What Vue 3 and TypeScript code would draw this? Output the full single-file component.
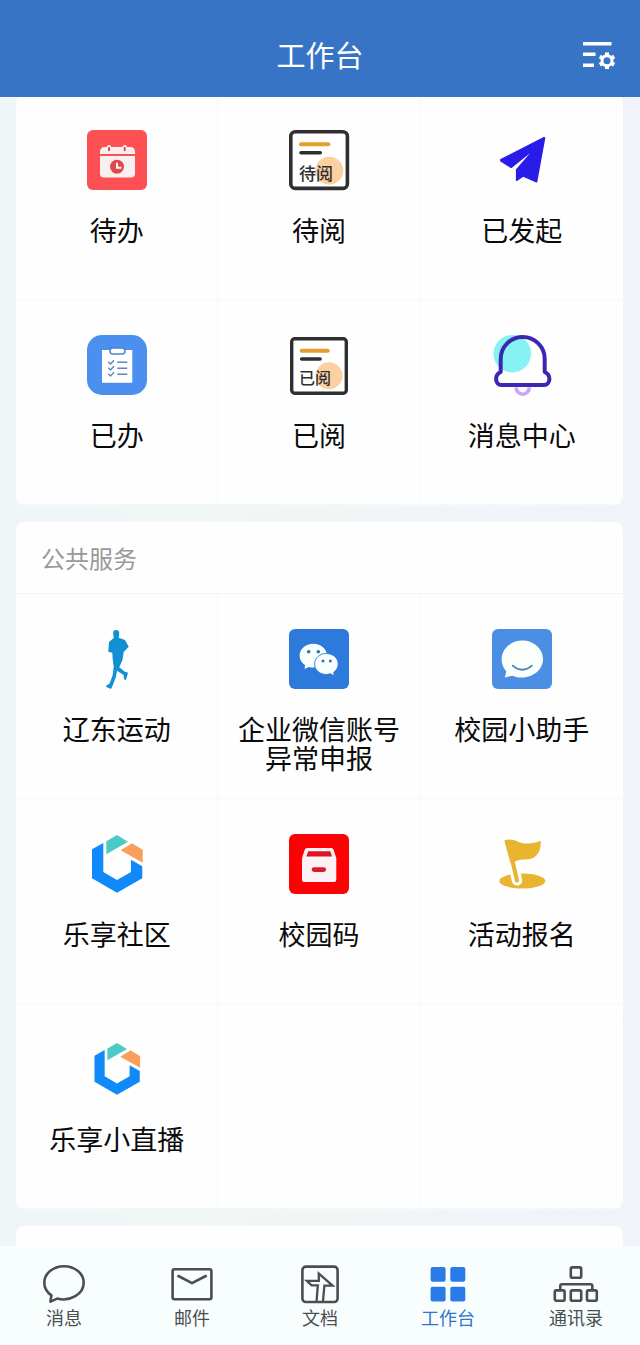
<script setup lang="ts">
import { ref } from 'vue'

type IconName =
  | 'calendar' | 'unread' | 'plane' | 'clipboard' | 'read' | 'bell'
  | 'runner' | 'wechat' | 'assistant' | 'hexagon' | 'code' | 'flag' | 'hexagonSmall'

interface AppItem {
  label: string
  icon: IconName
}

interface Section {
  id: string
  title?: string
  items: AppItem[]
}

const sections: Section[] = [
  {
    id: 'approval',
    items: [
      { label: '待办', icon: 'calendar' },
      { label: '待阅', icon: 'unread' },
      { label: '已发起', icon: 'plane' },
      { label: '已办', icon: 'clipboard' },
      { label: '已阅', icon: 'read' },
      { label: '消息中心', icon: 'bell' },
    ],
  },
  {
    id: 'public',
    title: '公共服务',
    items: [
      { label: '辽东运动', icon: 'runner' },
      { label: '企业微信账号异常申报', icon: 'wechat' },
      { label: '校园小助手', icon: 'assistant' },
      { label: '乐享社区', icon: 'hexagon' },
      { label: '校园码', icon: 'code' },
      { label: '活动报名', icon: 'flag' },
      { label: '乐享小直播', icon: 'hexagonSmall' },
    ],
  },
]

const blanks = (count: number): number => (3 - (count % 3)) % 3

const tabs = [
  { id: 'chat', label: '消息' },
  { id: 'mail', label: '邮件' },
  { id: 'docs', label: '文档' },
  { id: 'work', label: '工作台' },
  { id: 'contacts', label: '通讯录' },
]
const active = ref('work')
</script>

<template>
  <div class="app">
    <header class="topbar">
      <h1>工作台</h1>
      <button class="settings" type="button" aria-label="设置">
        <svg width="36" height="36" viewBox="0 -4 36 36" fill="none" stroke="#fff">
          <path d="M2 3.7H30.5M2 14.3H14.5M2 25.3H13" stroke-width="3.4" />
          <circle cx="26" cy="20.7" r="5" stroke-width="3" />
          <path
            v-for="n in 6"
            :key="n"
            d="M26 12.4V15.4"
            stroke-width="4"
            :transform="`rotate(${n * 60} 26 20.7)`"
          />
        </svg>
      </button>
    </header>

    <main class="content">
      <section v-for="s in sections" :key="s.id" class="card">
        <h2 v-if="s.title">{{ s.title }}</h2>
        <ul class="grid">
          <li v-for="item in s.items" :key="item.label">
            <button class="tile" type="button">
              <svg class="icon" viewBox="0 0 60 60" aria-hidden="true">
                <g v-if="item.icon === 'calendar'">
                  <rect width="60" height="60" rx="6" fill="#fd5054" />
                  <path d="M13 24V22Q13 17 18 17H43Q48 17 48 22V24Z" fill="#fbeeee" />
                  <path d="M13 26H48V43.5Q48 47.5 44 47.5H17Q13 47.5 13 43.5Z" fill="#f6f0f0" />
                  <g stroke-linecap="round">
                    <path d="M22 17.3V19.7M37.7 17.3V19.7" stroke="#fbeeee" stroke-width="4.6" />
                    <path d="M22 18V20.3M37.7 18V20.3" stroke="#e0474c" stroke-width="2" />
                  </g>
                  <circle cx="30" cy="36.7" r="7" fill="#e2474d" />
                  <path d="M30 32.8V37.8H34.4" fill="none" stroke="#fff" stroke-width="2" />
                </g>

                <g v-else-if="item.icon === 'unread'">
                  <rect x="1.8" y="1.8" width="56.6" height="56.6" rx="4.5" fill="#fff" stroke="#2f2f31" stroke-width="3.6" />
                  <circle cx="40.3" cy="40.7" r="14" fill="#fcd0a0" />
                  <path d="M12 14.3H39.3" stroke="#e59d2b" stroke-width="4" stroke-linecap="round" />
                  <path d="M12 22.8H31.3" stroke="#2f2f31" stroke-width="3.6" stroke-linecap="round" />
                  <text class="glyph" x="10" y="50" font-size="17">待阅</text>
                </g>

                <g v-else-if="item.icon === 'read'">
                  <rect x="2.7" y="3.7" width="54.6" height="54.6" rx="3" fill="#fff" stroke="#2f2f31" stroke-width="3.4" />
                  <circle cx="40" cy="40.7" r="13.5" fill="#fcd0a0" />
                  <path d="M12.7 15.7H38.7" stroke="#e59d2b" stroke-width="4" stroke-linecap="round" />
                  <path d="M12.7 24H31" stroke="#2f2f31" stroke-width="3.6" stroke-linecap="round" />
                  <text class="glyph" x="10" y="49" font-size="16">已阅</text>
                </g>

                <path
                  v-else-if="item.icon === 'plane'"
                  d="M52 7.6 8.8 29.6V31L19.2 37.4 43.7 17.6 24.6 39.6V50.4L31.3 46 44.6 51.8 52.6 8Z"
                  fill="#2a1ce8" stroke="#2a1ce8" stroke-width="1.4" stroke-linejoin="round"
                />

                <g v-else-if="item.icon === 'clipboard'">
                  <rect width="60" height="60" rx="15" fill="#4b90ee" />
                  <path d="M15 15H45.3V47.7H15Z" fill="#fff" />
                  <rect x="23" y="13" width="15" height="6" rx="3" fill="#fff" stroke="#4b84d4" stroke-width="1.5" />
                  <path
                    d="M21.3 26.8 23.5 29 27 25.2M21.3 32.8 23.5 35 27 31.2M21.3 38.8 23.5 41 27 37.2M30.3 27.3H40.3M30.3 33.3H40.3M30.3 39.3H40.3"
                    fill="none" stroke="#5a86c4" stroke-width="1.4"
                  />
                </g>

                <g v-else-if="item.icon === 'bell'" fill="none">
                  <circle cx="20.3" cy="18.7" r="18.8" fill="#86f2f4" />
                  <path d="M24.1 51A6.6 6.6 0 0 0 37.3 51" stroke="#cfa3f4" stroke-width="3.6" transform="translate(0 1.6)" />
                  <path
                    d="M8.7 37V24A22 22 0 0 1 52.7 24V37C59.5 40 58.5 50 52 50H9.4C3 50 2 40 8.7 37Z"
                    stroke="#3d26b2" stroke-width="4" stroke-linejoin="round"
                  />
                </g>

                <path
                  v-else-if="item.icon === 'runner'"
                  d="M26.4 6C25.6 3 26.6 1 29 1S32.7 2.8 32.2 5.4L31.7 8.7 38 11 41.7 17.7 36.7 23 35.5 31 32.3 38.3 37.5 42.5 41 43.7 39 51 37 50.3 36.6 46 30 41.7 29 47.7 25.7 56.5 24 60 19 57.7 19.4 56.5 22.6 54.6 25.7 46 26.7 37.7 25.6 29.3 25.3 23.7 21.3 22.7 22 13 26.7 9Z"
                  fill="#1290d5"
                />

                <g v-else-if="item.icon === 'wechat'">
                  <rect width="60" height="60" rx="6" fill="#2e79dc" />
                  <path d="M24.3 14.7C16.7 14.7 10.6 20 10.6 26.7C10.6 30.6 12.6 33.7 16 36L15.6 40 20 37.9C29 40.2 38 34.6 38 26.7C38 20 31.9 14.7 24.3 14.7Z" fill="#f8ffff" />
                  <path d="M37.3 24.5C30.8 24.5 25.6 29 25.6 35S30.8 45.5 37.3 45.5L41.5 44.8 45.2 46.7 44.7 43.2C47.6 41.2 49.2 38.4 49.2 35C49.2 29 44 24.5 37.3 24.5Z" fill="#f8ffff" stroke="#2e79dc" stroke-width=".9" />
                  <g fill="#3d6fa8">
                    <circle cx="19.7" cy="22.7" r="1.8" />
                    <circle cx="29.3" cy="22.7" r="1.8" />
                    <circle cx="34" cy="32" r="1.5" />
                    <circle cx="41.3" cy="32" r="1.5" />
                  </g>
                </g>

                <g v-else-if="item.icon === 'assistant'">
                  <rect width="60" height="60" rx="6" fill="#4a8fe3" />
                  <path d="M30.3 11.6C18.8 11.6 9.6 19.8 9.6 30.3C9.6 35 11.4 39.3 14.3 42.5L12.8 48.4 20.4 46.7C34 52.6 51 44 51 30.3C51 19.8 41.8 11.6 30.3 11.6Z" fill="#fafffc" />
                  <path d="M20.8 36.6Q30.3 44.8 39.8 36.6" fill="none" stroke="#477fc0" stroke-width="1.8" stroke-linecap="round" />
                </g>

                <g
                  v-else-if="item.icon === 'hexagon' || item.icon === 'hexagonSmall'"
                  :transform="item.icon === 'hexagonSmall' ? 'translate(3 3) scale(.9)' : undefined"
                >
                  <path d="M5 15.3 16.3 9V38L30 46 44 38V25.7L55.3 32.3V44.3L30 58.7 5 44.3Z" fill="#108af9" />
                  <path d="M19.3 7.3 30 1 41 7.7 19.3 20.3Z" fill="#4bcac6" />
                  <path d="M33.7 16.3 45 9.3 55.7 15.7V28.7Z" fill="#fa9e5b" />
                </g>

                <g v-else-if="item.icon === 'code'">
                  <rect width="60" height="60" rx="6" fill="#fb0204" />
                  <path d="M18 14H42.3Q44 14 44.5 15.6L47.3 24V46Q47.3 48 45.3 48H15Q13 48 13 46V24L15.8 15.6Q16.3 14 18 14Z" fill="#fdf1f5" />
                  <path d="M19.3 17.3H41.3L43 22.6H17.3Z" fill="#e01320" />
                  <rect x="22.7" y="33.2" width="14.4" height="4.8" rx="2.4" fill="#d81b2c" />
                </g>

                <g v-else-if="item.icon === 'flag'">
                  <ellipse cx="30.3" cy="47" rx="23" ry="7.6" fill="#e9b531" />
                  <path d="M20 25 25 46.4" stroke="#fff" stroke-width="10.4" stroke-linecap="round" />
                  <path d="M20 25 25 46.4" stroke="#e9b531" stroke-width="4.2" stroke-linecap="round" />
                  <path d="M12.3 6.5C18 4.5 22 6 28 8.4C35 10.7 42 9.4 48.7 6.8C49.2 15.5 46 24.3 36 25.3C30 25.8 26 25.5 22.5 28L18.4 29Z" fill="#e9b531" />
                </g>
              </svg>
              <span class="label">{{ item.label }}</span>
            </button>
          </li>
          <li v-for="n in blanks(s.items.length)" :key="`blank-${n}`" aria-hidden="true"></li>
        </ul>
      </section>
      <section class="card next"></section>
    </main>

    <nav class="tabbar">
      <button
        v-for="t in tabs"
        :key="t.id"
        type="button"
        class="tab"
        :class="{ active: active === t.id }"
        @click="active = t.id"
      >
        <svg width="48" height="40" viewBox="0 0 48 40" fill="none" stroke="currentColor" stroke-width="2.6" stroke-linejoin="round" stroke-linecap="round" aria-hidden="true">
          <path
            v-if="t.id === 'chat'"
            d="M24 2.2C13 2.2 4.3 9.6 4.3 18.7C4.3 24 7 28.2 11.4 31.4L10.4 37.6 17.2 34.6C30 38.2 43.7 30 43.7 18.7C43.7 9.6 35 2.2 24 2.2Z"
          />
          <g v-else-if="t.id === 'mail'">
            <rect x="4.6" y="5.2" width="38.8" height="30" rx="2" />
            <path d="M10.4 12 24 19.2 37.8 12" />
          </g>
          <g v-else-if="t.id === 'docs'">
            <rect x="6.4" y="2.6" width="35.2" height="35.4" rx="3.5" />
            <path d="M20.6 37 21.8 21.4H15.6L10.8 16.8H22.8V9.6L36.6 21.6H28.4L27 37" stroke-width="2.3" stroke-linejoin="miter" />
          </g>
          <g v-else-if="t.id === 'work'" fill="#2a7be9" stroke="none">
            <rect x="6.6" y="3" width="15" height="14.8" rx="2" />
            <rect x="26.3" y="3" width="15" height="14.8" rx="2" />
            <rect x="6.6" y="22.7" width="15" height="14.8" rx="2" />
            <rect x="26.3" y="22.7" width="15" height="14.8" rx="2" />
          </g>
          <g v-else>
            <rect x="18.8" y="3.4" width="10.4" height="10.4" rx="1.5" />
            <rect x="2.8" y="26.4" width="9.8" height="10.4" rx="1.5" />
            <rect x="18.8" y="26.4" width="10.4" height="10.4" rx="1.5" />
            <rect x="35" y="26.4" width="9.8" height="10.4" rx="1.5" />
            <path d="M8.3 25.5V22Q8.3 20.2 10 20.2H38.7Q40.3 20.2 40.3 22V25.5" />
          </g>
        </svg>
        <span>{{ t.label }}</span>
      </button>
    </nav>
  </div>
</template>

<style>
body {
  margin: 0;
}
</style>

<style scoped>
.app {
  display: flex;
  flex-direction: column;
  height: 100vh;
  font-family: "Noto Sans CJK SC", sans-serif;
  background: linear-gradient(90deg, #eff6f7, #f2f5f6 50%, #f0f4fa);
}

button {
  margin: 0;
  padding: 0;
  border: 0;
  background: none;
  font: inherit;
  color: inherit;
  cursor: pointer;
}

svg {
  display: block;
}

.topbar {
  position: relative;
  z-index: 1;
  flex: none;
  display: grid;
  grid-template-columns: 1fr auto 1fr;
  align-items: center;
  padding: 36px 23px 25px;
  background: #3874c6;
  color: #fff;
}

h1 {
  grid-column: 2;
  margin: 0;
  font-size: 29px;
  line-height: 36px;
  font-weight: 400;
}

.settings {
  justify-self: end;
}

.content {
  flex: 1;
  min-height: 0;
  margin-top: -2px;
  padding: 0 17px 0 16px;
  display: flex;
  flex-direction: column;
  gap: 17px;
  overflow-y: auto;
  scrollbar-width: none;
}

.card {
  flex: none;
  background: #fefefe;
  border-radius: 8px;
  overflow: hidden;
}

.next {
  min-height: 72px;
}

h2 {
  margin: 0;
  padding: 18px 25px 17px;
  font-size: 24px;
  line-height: 36px;
  font-weight: 400;
  color: #999;
}

h2 + .grid {
  border-top: 1px solid #f3f5f4;
}

.grid {
  display: grid;
  grid-template-columns: repeat(3, minmax(0, 1fr));
  grid-auto-rows: 205px;
  margin: 0;
  padding: 0;
  list-style: none;
}

.grid li {
  box-sizing: border-box;
  border-right: 1px solid #f7f8f9;
  border-bottom: 1px solid #f7f8f9;
}

.grid li:nth-child(3n) {
  border-right: 0;
}

.tile {
  width: 100%;
  height: 100%;
  padding: 35px 18px 0;
  display: flex;
  flex-direction: column;
  align-items: center;
  gap: 25px;
}

.icon {
  flex: none;
  width: 60px;
  height: 60px;
  overflow: visible;
}

.glyph {
  fill: #2f2f31;
  font-weight: 500;
}

.label {
  font-size: 27px;
  line-height: 29px;
  color: #0a0a0a;
}

.tabbar {
  flex: none;
  display: grid;
  grid-template-columns: repeat(5, 1fr);
  background: #f8fefe;
}

.tab {
  display: flex;
  flex-direction: column;
  align-items: center;
  gap: 1px;
  padding: 18px 0 16px;
  font-size: 18px;
  line-height: 24px;
  color: #4b4d4e;
}

.tab.active {
  color: #2e76c8;
}
</style>
